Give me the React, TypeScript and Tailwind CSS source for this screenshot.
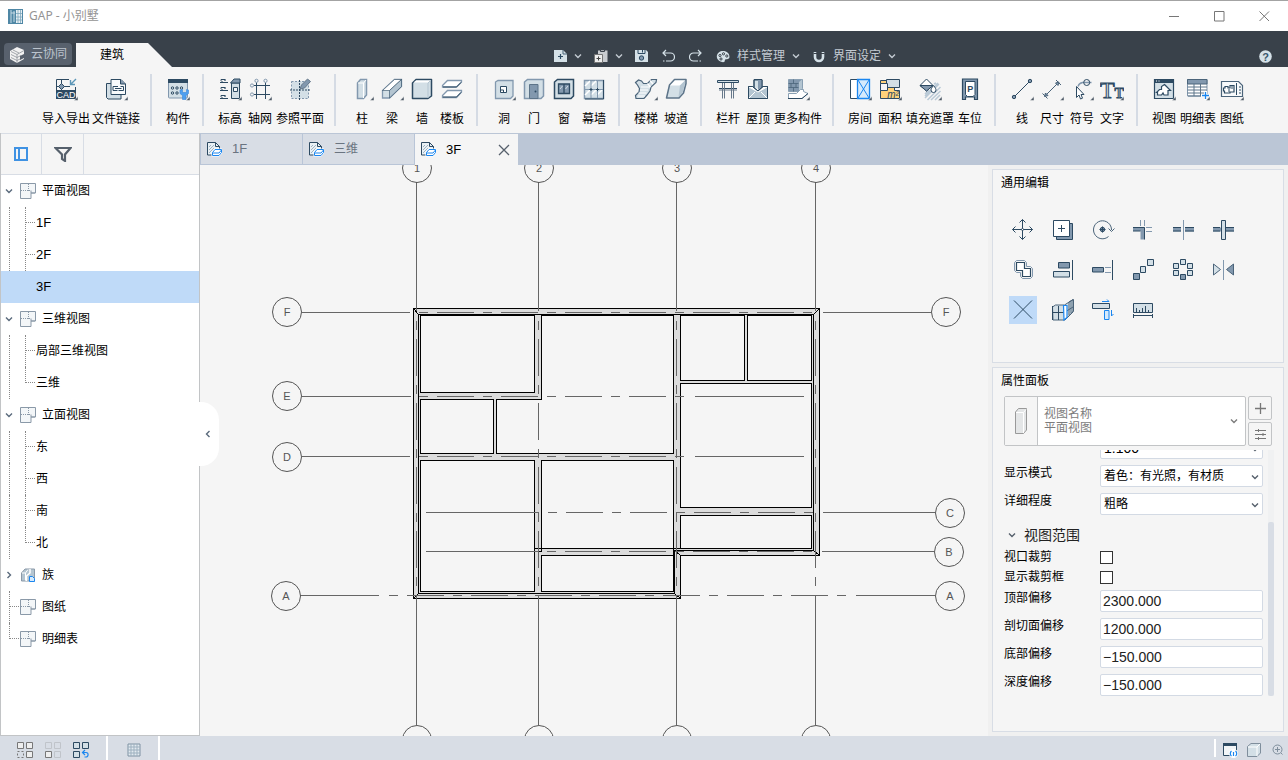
import React from "react";

const D = "#2d4a62";
const M = "#8298ae";
const L = "#d3dfe6";
const B = "#1a86f0";

type IconProps = { children: React.ReactNode; w?: number; h?: number; className?: string };

const Icon = ({ children, w = 24, h = 24, className = "" }: IconProps) => (
  <svg
    width={w}
    height={h}
    viewBox={`0 0 ${w} ${h}`}
    fill="none"
    stroke={D}
    className={`shrink-0 ${className}`}
    aria-hidden="true"
  >
    {children}
  </svg>
);

const Chevron = ({ className = "" }: { className?: string }) => (
  <svg width="8" height="8" viewBox="0 0 8 8" fill="none" stroke="currentColor" strokeWidth="1.4" className={`shrink-0 ${className}`} aria-hidden="true">
    <path d="M1 2.500l3 3 3-3" />
  </svg>
);

/* ---------- ribbon ---------- */

type Tool = { label: string; icon: React.ReactNode; more?: boolean; wide?: string };

const groups: Tool[][] = [
  [
    {
      label: "导入导出",
      more: true,
      wide: "w-[50px]",
      icon: (
        <>
          <path d="M2.500 12V1.500H15M2 8.500h14M7.500 2v10M21.500 9v4" />
          <path d="M7.500 5.500l3 3-3 3-3-3z" fill={M} />
          <path d="M22 1l-5 5M16.500 2v4.500H21" stroke="#5d97b8" strokeWidth="1.400" />
          <path d="M2 12h20v9H2z" fill={D} stroke="none" />
          <text x="12" y="20" textAnchor="middle" fontSize="9" fill="#fff" stroke="none">CAD</text>
        </>
      ),
    },
    {
      label: "文件链接",
      more: true,
      wide: "w-[50px]",
      icon: (
        <>
          <path d="M7 5.500H2.500v14l1.500 1.500h13v-4" fill={L} />
          <path d="M7 16.500V1.500h10l4.500 4.500v10.500z" fill="#f8fafb" />
          <path d="M16.500 1.500V6h5" fill={M} />
          <path d="M14 8.500H9v4h4.500M11 10.500h6.500M14.500 12.500h5v-4h-3" />
        </>
      ),
    },
  ],
  [
    {
      label: "构件",
      more: true,
      icon: (
        <>
          <rect x="2.500" y="1.500" width="19" height="18.500" rx="1" fill={L} stroke={M} />
          <path d="M2 1h20v4H2z" fill={D} stroke="none" />
          <g stroke={D}>
            <circle cx="6.500" cy="10" r="1.200" />
            <circle cx="11" cy="10" r="1.200" />
            <circle cx="15.500" cy="10" r="1.200" />
            <circle cx="6.500" cy="15" r="1.200" />
            <circle cx="11" cy="15" r="1.200" />
          </g>
          <path d="M14 12v3.500l2.500 2v4h3.500v-4l2.500-2V12l-2-.5v3h-4v-3z" fill="#4d9ff0" stroke="#3c86d6" strokeWidth=".6" />
        </>
      ),
    },
  ],
  [
    {
      label: "标高",
      more: true,
      icon: (
        <>
          <path d="M2 4.500h8M2 12.500h8M2 20.500h8M3 1.500h4v1.500M3 9.500h4v1.500M3 17.500h4v1.500" strokeWidth="1.200" />
          <path d="M3 1.500v1l2 2M3 9.500v1l2 2M3 17.500v1l2 2" />
          <path d="M13.500 5h8v15.500h-8z" fill={L} />
          <path d="M12.500 5l3.500-4h6v4z" fill={M} />
          <path d="M15.500 9.500h4v4h-4z" fill="#f5f7f9" />
        </>
      ),
    },
    {
      label: "轴网",
      more: true,
      icon: (
        <>
          <path d="M8.500 4.500V21M17.500 4.500V21M6 7.500h16M6 16.500h16" />
          <g stroke={M}>
            <circle cx="8.500" cy="2.800" r="1.600" />
            <circle cx="17.500" cy="2.800" r="1.600" />
            <circle cx="4" cy="7.500" r="1.600" />
            <circle cx="4" cy="16.500" r="1.600" />
          </g>
        </>
      ),
    },
    {
      label: "参照平面",
      wide: "w-[50px]",
      icon: (
        <>
          <path d="M3.500 3.500h17v17h-17z" fill={L} stroke={M} strokeDasharray="2 1.500" />
          <path d="M11.500 2v20M2 12h20" strokeDasharray="2 1" />
          <path d="M12 11l1.500-4 6-6 3 2.500-6 6.500z" fill={M} stroke="#66788a" />
        </>
      ),
    },
  ],
  [
    {
      label: "柱",
      more: true,
      icon: (
        <>
          <path d="M7.500 5l3-3.500h6V17l-3 3.500h-6z" fill={L} stroke={M} strokeWidth="1.500" />
          <path d="M8 5h5.500l2.500-3M13.500 5v15" stroke="#fff" />
        </>
      ),
    },
    {
      label: "梁",
      more: true,
      icon: (
        <>
          <path d="M2.500 12.500l12-11h7v7L9.500 20h-7z" fill={L} stroke={M} strokeWidth="1.300" />
          <path d="M2.500 12.500l12-11h7l-12 11z" fill="#fff" stroke={D} strokeWidth=".6" />
          <path d="M9.500 12.500V20l12-11.500v-7z" fill="#b4c5d1" stroke={D} strokeWidth=".6" />
        </>
      ),
    },
    {
      label: "墙",
      icon: (
        <>
          <path d="M2.500 5L6 1.500h15.500V18L18 20.500H2.500z" fill={L} strokeWidth="1.500" strokeLinejoin="round" />
          <path d="M3.500 4.500L6 2.500h14.500l-2.500 2z" fill="#fff" stroke="none" />
          <path d="M18 5v15M18 5l3-3" stroke="#b4c5d1" />
        </>
      ),
    },
    {
      label: "楼板",
      icon: (
        <>
          <path d="M2.500 7.500l5-5h14v1.500l-5 5h-14z" fill="#fff" stroke={M} strokeWidth="1.300" />
          <path d="M2.500 17.500l5-5h14V14l-5 5.500h-14z" fill="#fff" stroke={M} strokeWidth="1.300" />
          <path d="M3 9h13.500l4.500-4.500M3 19h13.500l4.500-4.500" />
        </>
      ),
    },
  ],
  [
    {
      label: "洞",
      more: true,
      icon: (
        <>
          <path d="M3.500 4L6 2.500h15V18l-2.500 2.500h-15z" fill={L} stroke={M} strokeWidth="1.300" />
          <path d="M8.500 8.500h6v6h-6z" fill="#fff" />
          <path d="M8.500 12h3v3" />
        </>
      ),
    },
    {
      label: "门",
      icon: (
        <>
          <path d="M2.500 4l3-2.500h16V18l-2.500 2.500h-16.500z" fill={L} stroke={M} strokeWidth="1.500" />
          <path d="M7.500 20.500v-14h8.500v14z" fill={M} stroke="#5d7489" />
          <circle cx="13.500" cy="13.500" r="1" fill={D} stroke="none" />
        </>
      ),
    },
    {
      label: "窗",
      icon: (
        <>
          <path d="M2.500 4l3-2.500h16V18L19 20.500H2.500z" fill={L} strokeWidth="1.500" />
          <path d="M6.500 6h11v9.500h-11zM12 6v9.500" fill={M} strokeWidth="1.300" />
          <path d="M8 11l2.500-3M13.500 11l2.500-3" stroke={L} />
        </>
      ),
    },
    {
      label: "幕墙",
      icon: (
        <>
          <path d="M2.500 2.500h19v18h-19z" fill={L} stroke={M} strokeWidth="1.500" />
          <path d="M3 8l5-5M9 8l5-5M3 17l5-5M9 17l5-5M15 17l5-5" stroke="#fff" strokeWidth="1.500" />
          <path d="M9 2v19M15.500 2v19M2 11.500h20" stroke={M} />
          <path d="M7.500 11.500h3M14 11.500h3M9 10v3M15.500 10v3M21.500 2v19H3" />
        </>
      ),
    },
  ],
  [
    {
      label: "楼梯",
      more: true,
      icon: (
        <>
          <path d="M1.500 4.500l3-2.500 3 1 2 2.500h4l4-4h5l-.5 3-5 4.500-1 4-3 4-3 3.500H2l-.5-3 3.500-3.500.5-3.500-2-3.500z" fill={L} strokeWidth="1.200" stroke="#4b647a" />
          <path d="M6 12h8M4.500 15h8M4 18h7M7 9h9M16 2.500l3 3.500M13.500 5.500l3 3.500" stroke="#fff" strokeWidth="1.200" />
        </>
      ),
    },
    {
      label: "坡道",
      icon: (
        <>
          <path d="M2.500 20l3-13 5-5.500h11.500v4L19.500 15 15 20z" fill={L} stroke="#5d7489" strokeWidth="1.500" strokeLinejoin="round" />
          <path d="M6 7.500l5-5h10l-5 5z" fill="#fff" stroke="none" />
          <path d="M16 7.500l5-5v3L18.500 15 14.500 19z" fill="#b4c5d1" stroke="none" />
        </>
      ),
    },
  ],
  [
    {
      label: "栏杆",
      icon: (
        <>
          <path d="M1.500 2.500h21v2h-21zM3 10.500h18" fill={L} />
          <path d="M6.500 5v15.500M8.500 5v15.500M15.500 5v15.500M17.500 5v15.500M3 12h18" stroke="#66788a" />
        </>
      ),
    },
    {
      label: "屋顶",
      icon: (
        <>
          <path d="M8 10.500V2h8v8.500" fill={L} />
          <path d="M12 12V2h4v8.500z" fill={M} stroke="none" />
          <path d="M2.500 8.500h4L12 13l5-4.500h4.500v12h-19z" fill="#fff" />
          <path d="M3 9l9 5 9-5v11H3z" fill="#b4c5d1" stroke="none" />
          <path d="M3 20l6-6M21 20l-6-6M3 9l9 5 9-5" stroke="#fff" />
          <path d="M2.500 8.500h4L12 13l5-4.500h4.500v12h-19zM8 9V1.500h8V9" />
        </>
      ),
    },
    {
      label: "更多构件",
      more: true,
      wide: "w-[50px]",
      icon: (
        <>
          <path d="M2.500 1.500h14v9l-4 3h-10z" fill={M} stroke="#8aa0b3" />
          <path d="M2.500 5.500h10M2.500 9.500h10M7.500 1.500v4M5 5.500v4M10 5.500v4M7.500 9.500v4" stroke="#4b647a" strokeWidth=".8" />
          <path d="M13 4l3-2.500v9l-3 3z" fill="#b4c5d1" stroke="none" />
          <path d="M2.500 15.500h8l4-4h3v2l4.500 2-6 5h-13.500z" fill="#fff" stroke="#8aa0b3" />
          <path d="M2 20.500h14l6-5" />
        </>
      ),
    },
  ],
  [
    {
      label: "房间",
      more: true,
      icon: (
        <>
          <path d="M2.500 1.500h7v19h-7z" fill="#fff" />
          <path d="M9.500 1.500h12v19h-12z" fill="#d6eafc" stroke={B} strokeWidth="1.300" />
          <path d="M10 2l11 18M21 2L10 20" stroke={B} />
        </>
      ),
    },
    {
      label: "面积",
      more: true,
      icon: (
        <>
          <path d="M2.500 2.500h14v10h5v8h-19z" fill="#ffd27a" />
          <path d="M8.500 1.500h13v8h-13z" fill={L} />
          <path d="M2.500 5.500h7v7h-7z" fill="#f5f5f5" />
          <text x="15" y="19.500" textAnchor="middle" fontSize="10" fontStyle="italic" fill={D} stroke="none">m²</text>
        </>
      ),
    },
    {
      label: "填充遮罩",
      more: true,
      wide: "w-[50px]",
      icon: (
        <>
          <path d="M7 20L21 6M9.500 22L22.500 9M13 22l9.500-9M17 22l5-5M7 16l4-4M16 6l2-1M7 18L20 5" stroke="#b9c9d6" strokeWidth="1.500" />
          <path d="M2 7.500L8.500 1l6.500 6.500L8.500 13z" fill="#fff" />
          <path d="M2 7.500h13L8.500 13z" fill={M} />
          <path d="M15.500 7.500c2 2.500 2.500 3.500 2.500 4.500a2.500 2.500 0 01-5 0c0-1 .5-2 2.500-4.500z" fill="#fff" />
        </>
      ),
    },
    {
      label: "车位",
      icon: (
        <>
          <path d="M4.500 1v20.500h3V19h9v2.500h3V1z" fill={M} strokeWidth="1.200" />
          <path d="M7.500 3.500h9.500v13l-2 2H9.500l-2-2z" fill="#fff" />
          <text x="12.300" y="14" textAnchor="middle" fontSize="9" fontWeight="bold" fill={D} stroke="none">P</text>
        </>
      ),
    },
  ],
  [
    {
      label: "线",
      more: true,
      icon: (
        <>
          <path d="M4 19L20 3" />
          <circle cx="4" cy="19" r="1.700" fill={M} />
          <circle cx="20" cy="3" r="1.700" fill={M} />
        </>
      ),
    },
    {
      label: "尺寸",
      more: true,
      icon: (
        <>
          <path d="M5 18L18.500 4.500M2.500 15.500l5 5M16 2l5 5" stroke="#4b647a" />
          <path d="M4.500 18.500l1-3.500 2.500 2.500zM19 4l-3.500 1L18 7.500z" fill={M} stroke="#4b647a" />
        </>
      ),
    },
    {
      label: "符号",
      more: true,
      icon: (
        <>
          <path d="M21.500 4.500h-9c-3 .5-4 2-4.500 4" stroke={M} strokeWidth="1.300" />
          <circle cx="16.700" cy="4.500" r="3" />
          <path d="M6.500 8.500v11l2.500-2.500 1.500 4 2-.8-1.500-3.700H14z" fill="#fff" />
        </>
      ),
    },
    {
      label: "文字",
      more: true,
      icon: (
        <>
          <text x="0" y="20" fontFamily="Liberation Serif" fontSize="24" fill={L} stroke={D}>T</text>
          <text x="14.500" y="20" fontFamily="Liberation Serif" fontSize="14" fontWeight="bold" fill={M} stroke={D} strokeWidth=".8">T</text>
        </>
      ),
    },
  ],
  [
    {
      label: "视图",
      more: true,
      icon: (
        <>
          <path d="M2.500 1.500h19v19h-19z" fill={L} strokeWidth="1.200" />
          <path d="M2 1h20v4H2z" fill={D} stroke="none" />
          <path d="M4 3h1M6.500 3h1" stroke="#fff" />
          <path d="M12.500 6.500l6 6H16v4.500h-4l-1-2-1.500 2h-4v-2.500h-1l3-3h2V8.500z" fill="#fff" strokeWidth="1.200" />
        </>
      ),
    },
    {
      label: "明细表",
      more: true,
      wide: "w-[38px]",
      icon: (
        <>
          <path d="M1.500 1.500h19.500V18h-19.500z" fill="#fff" stroke={M} />
          <path d="M1.500 1.500h19.500V6h-19.500z" fill={M} stroke="#4b647a" />
          <path d="M1.500 9h19.500M1.500 12h19.500M1.500 15h19.500M8 6v12M14.500 6v12M2 18h13" stroke="#5d7489" />
          <path d="M19.500 13v9M15 17.500h9" stroke="#fff" strokeWidth="3" />
          <path d="M19.500 14v7M16 17.500h7" stroke={B} strokeWidth="1.300" />
        </>
      ),
    },
    {
      label: "图纸",
      more: true,
      icon: (
        <>
          <path d="M1.500 3.500h17l4 4v11h-21z" fill="#f8fafb" stroke="#4b647a" strokeWidth="1.200" />
          <path d="M5 8.500h3v1.500h2V7.500h4V14h-4v1H4.500v-2h-1v-3H5z" fill="#fff" strokeWidth="1.200" />
          <path d="M12 8v3M9 11v3M16.500 5v12M19 9h2M19 12h2M19 15h2" />
        </>
      ),
    },
  ],
];

const RibbonTool = ({ tool }: { tool: Tool }) => (
  <button type="button" className={`flex flex-col items-center gap-[9px] whitespace-nowrap ${tool.wide ?? "w-[30px]"}`}>
    <Icon>
      {tool.icon}
      {tool.more && <path d="M24 18.500v4h-4z" fill="#4a5663" stroke="#f5f5f5" strokeWidth=".5" />}
    </Icon>
    <span className="text-xs leading-4">{tool.label}</span>
  </button>
);

/* ---------- header ---------- */

const TitleBar = () => (
  <header className="flex h-[31px] shrink-0 items-center border-t border-[#a3a3a3] bg-white pl-2 pr-px">
    <Icon w={15} h={15}>
      <path d="M0 0h15v15H0z" fill="#4f87a5" stroke="none" />
      <path d="M3 1v13M3 4h4M6 2v11" stroke="#c8dbe6" />
      <path d="M8 1h6v13H8z" fill="#e8f0f4" stroke="none" />
      <path d="M10 1v13M12.500 1v13M8 4.500h6M8 8h6M8 11h6" stroke="#7ea7bd" strokeWidth=".8" />
    </Icon>
    <h1 className="ml-1.5 flex-1 font-['Noto_Sans','Noto_Sans_CJK_SC',sans-serif] text-xs text-[#949494]">GAP - 小别墅</h1>
    <button type="button" aria-label="最小化" className="flex w-[45px] justify-center">
      <Icon w={11} h={11}><path d="M0 5.500h10" stroke="#777" /></Icon>
    </button>
    <button type="button" aria-label="最大化" className="flex w-[45px] justify-center">
      <Icon w={11} h={11}><path d="M.500.500h9.500v9.500H.500z" stroke="#777" /></Icon>
    </button>
    <button type="button" aria-label="关闭" className="flex w-[45px] justify-center">
      <Icon w={11} h={11}><path d="M.500.500l9.500 9.500M10 .500L.500 10" stroke="#777" /></Icon>
    </button>
  </header>
);

const QuickBar = () => (
  <div className="ml-[382px] flex items-center gap-3 self-end pb-[3px] text-[#c3cad2]">
    <button type="button" aria-label="新建" className="flex items-center gap-[7px]">
      <Icon w={13} h={14}>
        <path d="M0 1h9l4 4v8H0z" fill="#d5e1e8" stroke="none" />
        <path d="M9 1v4h4" stroke="#4b6478" />
        <path d="M6.500 5v5M4 7.500h5" strokeWidth="1.200" />
      </Icon>
      <Chevron />
    </button>
    <button type="button" aria-label="粘贴" className="flex items-center gap-[7px]">
      <Icon w={14} h={14}>
        <path d="M4 1.500h9.500V13H8V5H4z" fill="#c9ccd0" stroke="none" />
        <path d="M6.500.500h4v2h-4z" fill="#a7abb0" stroke="#39414a" />
        <path d="M.500 5.500h8v8h-8z" fill="#eee" stroke="#777" />
        <path d="M4.500 7.500v4M2.500 9.500h4" stroke="#444" />
      </Icon>
      <Chevron />
    </button>
    <button type="button" aria-label="保存">
      <Icon w={13} h={14} className="block">
        <path d="M0 1h11l2 2v10H0z" fill="#d5e1e8" stroke="none" />
        <path d="M3 1v3.500h7V1M7.500 1v2.500" />
        <circle cx="6.500" cy="9" r="2.200" fill={M} />
      </Icon>
    </button>
    <button type="button" aria-label="撤销" className="ml-0.5">
      <Icon w={13} h={14} className="block">
        <path d="M4 1L1 4l3 3M1 4h7.500a4 4 0 010 8H4M1 12h1.500" stroke="#d5e1e8" strokeWidth="1.200" />
      </Icon>
    </button>
    <button type="button" aria-label="重做" className="ml-0.5">
      <Icon w={13} h={14} className="block">
        <path d="M9 1l3 3-3 3M12 4H4.500a4 4 0 000 8H9M10.500 12H12" stroke="#d5e1e8" strokeWidth="1.200" />
      </Icon>
    </button>
    <button type="button" className="ml-0.5 flex items-center gap-[7px] text-xs leading-4">
      <Icon w={14} h={14}>
        <path d="M7 2c4 0 6.500 2.500 6.500 6 0 2-2 2.200-3.500 2.200-1.500 0-1 1.500-1.500 2.500C7 14.200.800 12 .800 7.500.800 4 4 2 7 2z" fill="#d5e1e8" stroke="none" />
        <g stroke="#39414a">
          <circle cx="4" cy="6.500" r="1.100" />
          <circle cx="7.500" cy="4.800" r="1.100" />
          <circle cx="10.800" cy="7" r="1.100" />
          <circle cx="5" cy="10" r="1.100" />
        </g>
      </Icon>
      样式管理
      <Chevron />
    </button>
    <button type="button" className="flex items-center gap-[7px] text-xs leading-4">
      <Icon w={14} h={14}>
        <path d="M3 3v5a4 4 0 008 0V3" stroke="#d5e1e8" strokeWidth="2.600" />
        <path d="M1.500 4.500h3.500M9 4.500h3.500" stroke="#39414a" />
      </Icon>
      界面设定
      <Chevron />
    </button>
  </div>
);

const MenuBar = () => (
  <nav className="flex h-9 shrink-0 items-end bg-[#39414a] pl-1">
    <button type="button" className="mb-0.5 flex h-[22px] w-[68px] items-center gap-1.5 whitespace-nowrap rounded-sm bg-[#58616d] pl-1.5 text-xs text-[#bcc4cd]">
      <Icon w={15} h={17}>
        <path d="M0 5l7-4 7 3v9l-7 4-7-4z" fill="#f2f2f2" stroke="none" />
        <path d="M1 5.500l6 3 7-4M7 8.500V17M1 8.500l6 3 4-2M1 11.500l6 3 4-2M3 4l6 3" stroke="#8b9198" strokeWidth=".8" />
        <path d="M10 10l4-2v4l-4 2z" fill="#58616d" stroke="none" />
      </Icon>
      云协同
    </button>
    <button type="button" className="ml-1 flex h-6 w-24 items-center bg-[#f5f5f5] pl-6 text-xs [clip-path:polygon(0_0,75%_0,100%_100%,0_100%)]">
      建筑
    </button>
    <QuickBar />
    <button type="button" aria-label="帮助" className="ml-auto mr-4 self-end pb-1">
      <Icon w={13} h={13} className="block">
        <circle cx="6.500" cy="6.500" r="6.300" fill="#d5e1e8" stroke="none" />
        <text x="6.500" y="10.500" textAnchor="middle" fontSize="11" fontWeight="bold" fill="#39566c" stroke="none">?</text>
      </Icon>
    </button>
  </nav>
);

/* ---------- left tree ---------- */

const PlanIcon = () => (
  <Icon w={16} h={16}>
    <path d="M.500.500h15v9.500H11v5.500H.500z" fill="#f3f6f8" stroke="#8a99a8" />
    <path d="M1 7.500h10M8.500 1v7" stroke="#8a99a8" strokeDasharray="1 1" />
    <path d="M11 7.500V10h4" stroke="#8a99a8" />
  </Icon>
);

const FamilyIcon = () => (
  <Icon w={16} h={16}>
    <path d="M1.500 6l3.500-4h9.500v12h-13z" fill="#b4c5d1" stroke="#8a99a8" />
    <path d="M2 6h3.500L8 2.500M5.500 13.500V6" stroke="#fff" />
    <path d="M6.500 14V9L10 6V2" stroke="#fff" strokeWidth="1.500" />
    <path d="M9.500 9.500h3l2 2v3h-5z" fill="#d6eafc" stroke={B} />
  </Icon>
);

const RootRow = ({ label, open = true, family = false }: { label: string; open?: boolean; family?: boolean }) => (
  <li className="flex h-8 items-center pl-1 text-[#5a6a7c]">
    <Chevron className={open ? "" : "-rotate-90"} />
    <span className="ml-[7px]">{family ? <FamilyIcon /> : <PlanIcon />}</span>
    <span className="ml-1.5 text-xs text-black">{label}</span>
  </li>
);

const ChildRow = ({ label, last = false, active = false }: { label: string; last?: boolean; active?: boolean }) => (
  <li className={`flex h-8 items-start pl-2 ${active ? "bg-[#bfdaf8]" : ""}`}>
    <span className={`h-8 w-4 ${active ? "" : "border-l border-dotted border-[#888]"}`} />
    <span className={`w-[11px] ${last ? "h-4" : "h-8"} ${active ? "" : "border-l border-dotted border-[#888]"}`}>
      {!active && <span className="block h-4 w-[9px] border-b border-dotted border-[#888]" />}
    </span>
    <span className={/F$/.test(label) ? "text-[13px] leading-8" : "text-xs leading-8"}>{label}</span>
  </li>
);

const LeafRow = ({ label, last = false }: { label: string; last?: boolean }) => (
  <li className="flex h-8 items-start pl-2">
    <span className={`w-[11px] ${last ? "h-4" : "h-8"} border-l border-dotted border-[#888]`}>
      <span className="block h-4 w-[9px] border-b border-dotted border-[#888]" />
    </span>
    <span className="flex h-8 items-center gap-1.5 text-xs">
      <PlanIcon />
      {label}
    </span>
  </li>
);

const Sidebar = () => (
  <aside className="relative z-10 flex w-[200px] shrink-0 flex-col border-x border-b border-[#c2c4c6] bg-white">
    <div className="flex h-[42px] shrink-0 border-y border-[#d8dde5] bg-[#f5f5f5]">
      <button type="button" aria-label="面板" className="flex w-[41px] items-center justify-center border-r border-[#d8dde5]">
        <Icon w={14} h={14}><path d="M1 1h12v12H1zM5 1v12" stroke="#3f92e3" strokeWidth="2" /></Icon>
      </button>
      <button type="button" aria-label="过滤" className="flex w-[42px] items-center justify-center border-r border-[#d8dde5]">
        <Icon w={18} h={15}><path d="M1.500 1h15L11 7.500V14l-3-2V7.500z" stroke="#56606c" strokeWidth="2.200" /></Icon>
      </button>
    </div>
    <ul className="flex-1">
      <RootRow label="平面视图" />
      <ChildRow label="1F" />
      <ChildRow label="2F" />
      <ChildRow label="3F" active />
      <RootRow label="三维视图" />
      <ChildRow label="局部三维视图" />
      <ChildRow label="三维" last />
      <RootRow label="立面视图" />
      <ChildRow label="东" />
      <ChildRow label="西" />
      <ChildRow label="南" />
      <ChildRow label="北" last />
      <RootRow label="族" open={false} family />
      <LeafRow label="图纸" />
      <LeafRow label="明细表" last />
    </ul>
    <button
      type="button"
      aria-label="收起"
      className="absolute -right-5 top-1/2 flex h-16 w-[21px] -translate-y-1/2 items-center rounded-r-[18px] bg-white pl-1.5 text-[#5a6a7c]"
    >
      <Chevron className="rotate-90" />
    </button>
  </aside>
);

/* ---------- document tabs ---------- */

const DocIcon = () => (
  <Icon w={15} h={15}>
    <path d="M.500.500h8l4 4V13H.500z" fill="#e9f0f4" />
    <path d="M2 5l2-2M2 8l5-5M2 11l5-5" stroke="#9fb2c2" />
    <path d="M8.500.500v4h4" />
    <path d="M4.500 14.500v-5l2.500-3h8v5l-3 3z" fill="#fff" stroke="none" />
    <path d="M5.500 10.500l2.500-3h6.500v3L12 13.500H5.500z" fill="#fff" stroke={B} />
    <path d="M5.500 11h6.500l2.500-3" stroke={B} />
  </Icon>
);

const DocTabs = () => (
  <div className="flex h-8 shrink-0 border-t border-[#bbc6d6] bg-[#bbc6d6]">
    <button type="button" className="flex w-[103px] items-center border border-t-0 border-[#b9c5d7] bg-[#d8dde5] pl-1.5 text-[13px] text-[#6a7480]">
      <DocIcon />
      <span className="ml-2.5">1F</span>
    </button>
    <button type="button" className="flex w-28 items-center border-b border-r border-[#b9c5d7] bg-[#d8dde5] pl-1.5 text-xs text-[#6a7480]">
      <DocIcon />
      <span className="ml-2.5">三维</span>
    </button>
    <div className="flex w-[103px] items-center bg-[#f5f5f5] pl-1.5 text-[13px]">
      <DocIcon />
      <span className="ml-2.5 flex-1">3F</span>
      <button type="button" aria-label="关闭标签" className="mr-2">
        <Icon w={12} h={12}><path d="M1 1l10 10M11 1L1 11" stroke="#56606c" strokeWidth="1.300" /></Icon>
      </button>
    </div>
  </div>
);

/* ---------- floor plan ---------- */

const rooms = [
  "420.500 315.500 534.500 315.500 534.500 392.500 420.500 392.500",
  "541.500 315.500 673.500 315.500 673.500 453.500 496.500 453.500 496.500 399.500 541.500 399.500",
  "420.500 399.500 493.500 399.500 493.500 453.500 420.500 453.500",
  "680.500 315.500 744.500 315.500 744.500 380.500 680.500 380.500",
  "747.500 315.500 811.500 315.500 811.500 380.500 747.500 380.500",
  "680.500 383.500 811.500 383.500 811.500 507.500 680.500 507.500",
  "680.500 515.500 811.500 515.500 811.500 548.500 680.500 548.500",
  "420.500 460.500 534.500 460.500 534.500 591.500 420.500 591.500",
  "541.500 460.500 673.500 460.500 673.500 548.500 541.500 548.500",
  "541.500 555.500 673.500 555.500 673.500 591.500 541.500 591.500",
];

const bubbles = [
  { x: 287, y: 312, t: "F" },
  { x: 287, y: 396, t: "E" },
  { x: 287, y: 457, t: "D" },
  { x: 286, y: 596, t: "A" },
  { x: 946, y: 312, t: "F" },
  { x: 950, y: 513, t: "C" },
  { x: 949, y: 552, t: "B" },
  { x: 950, y: 596, t: "A" },
  { x: 417, y: 168, t: "1" },
  { x: 539, y: 168, t: "2" },
  { x: 677, y: 168, t: "3" },
  { x: 816, y: 168, t: "4" },
  { x: 417, y: 740, t: "1" },
  { x: 539, y: 740, t: "2" },
  { x: 677, y: 740, t: "3" },
  { x: 816, y: 740, t: "4" },
];

const columns = [416.5, 538.5, 676.5, 815.5];

const FloorPlan = () => (
  <svg
    viewBox="200 165 788 571"
    preserveAspectRatio="xMidYMid slice"
    fill="none"
    className="block h-full w-full"
    shapeRendering="crispEdges"
  >
    <g stroke="#000">
      <path d="M413.500 308.500H819.500V555.500H680.500V598.500H413.500z" fill="#dcdcdc" />
      <path d="M418.500 314.500H813.500V550.500H674.500V593.500H418.500z" />
      {rooms.map((points) => (
        <polygon key={points} points={points} fill="#f5f5f5" />
      ))}
      <path d="M534 548.500H812M534.500 548V552M541.500 548V552M534 551.500h7M673.500 548V592" />
      <path d="M413.500 308.500l5 6M819.500 308.500l-6 6M819.500 555.500l-6-5M680.500 555.500l-6-5M413.500 598.500l5-5M680.500 598.500l-6-5" />
    </g>
    <g stroke="#666">
      {columns.map((x) => (
        <g key={x}>
          <path d={`M${x} 182V311M${x} 596V725`} />
          <path d={`M${x} 321V588`} strokeDasharray="9 9 37 9" />
        </g>
      ))}
      <path d="M302 312.500H410M302 396.500H411M302 456.500H410M300 595.500H379" />
      <path d="M823 312.500H931M823 512.500H935M822 551.500H934M856 595.500H935" />
      <path d="M419 312.500H814M419 396.500H686M419 456.500H686" strokeDasharray="9 9 37 9" />
      <path d="M695 396.500H804M695 456.500H804M426 512.500H539M426 551.500H539" />
      <path d="M548 512.500H814M547 551.500H814M389 595.500H848" strokeDasharray="9 9 37 9" />
    </g>
    <g stroke="#555" shapeRendering="auto">
      {bubbles.map((b) => (
        <g key={`${b.x}-${b.y}`}>
          <circle cx={b.x} cy={b.y} r="14.500" />
          <text x={b.x} y={b.y + 4} textAnchor="middle" fontSize="11" fill="#555" stroke="none">
            {b.t}
          </text>
        </g>
      ))}
    </g>
  </svg>
);

/* ---------- right panels ---------- */

const editTools: { name: string; icon: React.ReactNode; active?: boolean }[] = [
  {
    name: "移动",
    icon: (
      <>
        <path d="M11.500 1.500v20M1.500 11.500h20M8.500 4.500l3-3 3 3M8.500 18.500l3 3 3-3M4.500 8.500l-3 3 3 3M18.500 8.500l3 3-3 3" />
        <circle cx="11.500" cy="11.500" r="1" fill="#fff" />
      </>
    ),
  },
  {
    name: "复制",
    icon: (
      <>
        <path d="M5.500 5.500h16v16h-16z" fill={M} />
        <path d="M2.500 2.500h16v16h-16z" fill="#fff" />
        <path d="M10.500 7v7M7 10.500h7" />
      </>
    ),
  },
  {
    name: "旋转",
    icon: (
      <>
        <path d="M17.500 18.500A9 9 0 1120.500 12M17.500 10.500l3 3 3-3" stroke="#4b647a" />
        <circle cx="11.500" cy="11.500" r="2.200" fill={M} />
        <path d="M11.500 8.500v6M8.500 11.500h6" />
      </>
    ),
  },
  {
    name: "修剪",
    icon: (
      <>
        <path d="M2 9h11.500v12.500H9.500V13H2z" fill={M} stroke="none" />
        <path d="M2 9.500h11.500V21.500M2 13h7.500" />
        <path d="M9.500 2v6M13.500 2v6M15 9.500h6M15 13.500h6" stroke={M} />
      </>
    ),
  },
  {
    name: "打断",
    icon: (
      <>
        <path d="M2 9.500h8v4H2zM14 9.500h9v4h-9z" fill={M} stroke="none" />
        <path d="M2 9.500h8M14 9.500h9M2 13h8M14 13h9" />
        <path d="M12.500 2v20" stroke={M} />
      </>
    ),
  },
  {
    name: "延伸",
    icon: (
      <>
        <path d="M2 9.500h8v4H2zM14 9.500h9v4h-9z" fill={M} stroke="none" />
        <path d="M2 9.500h7M15 9.500h8M2 13h7M15 13h8" />
        <path d="M10.500 2.500h4v19h-4z" fill={L} />
      </>
    ),
  },
  {
    name: "合并",
    icon: (
      <>
        <path d="M5.500 2.500h8l2 2v4h4l2 2v8l-2 2h-8l-2-2v-4h-4l-2-2v-8z" stroke={M} />
        <path d="M5.500 4.500h8v6h6v8h-8v-6h-6z" fill="#fff" strokeWidth="1.200" />
      </>
    ),
  },
  {
    name: "对齐",
    icon: (
      <>
        <path d="M7.500 4.500h11v5.500h-11z" fill={M} />
        <path d="M2.500 13.500h16v5.500h-16z" fill={L} />
        <path d="M21.500 2v20" />
      </>
    ),
  },
  {
    name: "对齐到线",
    icon: (
      <>
        <path d="M1.500 9.500h11v4.500h-11z" fill={M} />
        <path d="M14 9.500h6M14 14.500h6" stroke={M} />
        <path d="M21.500 2v20" />
      </>
    ),
  },
  {
    name: "阵列",
    icon: (
      <>
        <path d="M2.500 15.500h6v6h-6z" fill={M} />
        <path d="M9.500 8.500h5v6h-5zM16.500 1.500h6v6h-6z" fill={L} />
      </>
    ),
  },
  {
    name: "环形阵列",
    icon: (
      <>
        <path d="M9.500 1.500h5v5h-5zM2.500 5.500h5v5h-5zM16.500 5.500h5v5h-5zM2.500 12.500h5v5h-5zM16.500 12.500h5v5h-5z" fill={L} />
        <path d="M9.500 16.500h5v5h-5z" fill={M} />
      </>
    ),
  },
  {
    name: "镜像",
    icon: (
      <>
        <path d="M2.500 6v11l7-5.500z" fill={L} stroke="#4b647a" />
        <path d="M22.500 6v11l-7-5.500z" fill={M} stroke="#4b647a" />
        <path d="M12.500 2v20" stroke={M} />
      </>
    ),
  },
  { name: "删除", active: true, icon: <path d="M3 2.500l18 18M21 2.500l-18 18" /> },
  {
    name: "幕墙编辑",
    icon: (
      <>
        <path d="M1.500 9l3-2h9l8.500-5.500V14L14 22H2z" fill={L} stroke="#4b647a" />
        <path d="M14 22l8.500-9V1.500L18 4v13M20 3v12M14 14l8-5" stroke="#4b647a" />
        <path d="M2 14.500h11M7.500 8v14M1.500 8v14" />
        <path d="M12.500 7.500h3.500v12l-3 2.500z" fill="#fff" stroke={B} strokeWidth="1.200" />
      </>
    ),
  },
  {
    name: "翻转",
    icon: (
      <>
        <path d="M1.500 5.500h17v5h-17z" fill={L} />
        <path d="M13.500 12.500h4.500v9h-4.500z" fill="#d6eafc" stroke={B} />
        <path d="M11 3.500h7M16 1.500l2 2M20.500 12v6M20.500 18l2-2" stroke={B} />
      </>
    ),
  },
  {
    name: "测量",
    icon: (
      <>
        <path d="M2.500 5.500h19v9h-19z" fill={L} />
        <path d="M5.500 10v4M8.500 12v2M11.500 10v4M14.500 8v6M17.500 12v2M2.500 17.500h19M2.500 16v4M21.500 16v4" />
      </>
    ),
  },
];

const EditPanel = () => (
  <section className="h-[194px] shrink-0 border border-[#d8dde5] bg-[#f5f5f5] pl-2">
    <h2 className="mt-[5px] text-xs leading-4">通用编辑</h2>
    <div className="ml-0.5 mt-[19px] grid w-[240px] grid-cols-6">
      {editTools.map((tool) => (
        <button key={tool.name} type="button" aria-label={tool.name} className="flex h-10 items-center justify-center">
          <span className={`flex size-7 items-center justify-center ${tool.active ? "bg-[#bfdaf8]" : ""}`}>
            <Icon>{tool.icon}</Icon>
          </span>
        </button>
      ))}
    </div>
  </section>
);

const SelectRow = ({ id, label, value, latin = false }: { id: string; label: string; value: string; latin?: boolean }) => (
  <div className="flex h-7 items-start">
    <label htmlFor={id} className="w-24 text-xs leading-4">{label}</label>
    <div className="relative flex-1 text-[#56606c]">
      <select
        id={id}
        className={`block h-[22px] w-full appearance-none rounded-[2px] border border-[#d3dae4] bg-white px-[3px] text-black ${latin ? "text-sm" : "text-xs"}`}
      >
        <option>{value}</option>
      </select>
      <Chevron className="pointer-events-none absolute right-1 top-2" />
    </div>
  </div>
);

const CheckRow = ({ id, label }: { id: string; label: string }) => (
  <div className="flex h-5 items-center">
    <label htmlFor={id} className="w-24 text-xs leading-4">{label}</label>
    <input id={id} type="checkbox" className="size-[13px] appearance-none border border-[#333] bg-white" />
  </div>
);

const InputRow = ({ id, label, value }: { id: string; label: string; value: string }) => (
  <div className="flex h-7 items-start">
    <label htmlFor={id} className="w-24 text-xs leading-4">{label}</label>
    <input
      id={id}
      type="text"
      defaultValue={value}
      className="h-[22px] w-0 flex-1 rounded-[2px] border border-[#d3dae4] bg-white px-0.5 text-sm text-[#222]"
    />
  </div>
);

const PropertyPanel = () => (
  <section className="flex flex-1 flex-col border border-[#d8dde5] bg-[#f5f5f5]">
    <h2 className="mt-[5px] pl-2 text-xs leading-4">属性面板</h2>
    <div className="mt-[7px] flex gap-0.5 px-[11px]">
      <button type="button" className="flex h-[50px] flex-1 items-center rounded-[2px] border border-[#c2c4c6] bg-white pr-[7px] text-left text-xs leading-[14px] text-[#7c7c7c]">
        <span className="flex h-full w-[33px] items-center justify-center border-r border-[#c2c4c6] bg-[#f5f5f5]">
          <Icon w={12} h={28}>
            <path d="M.500 5l3-3.500h8V23l-3 3.500h-8z" fill="#e4e6e7" stroke="#999" />
            <path d="M1 5.500h7.500l2.500-3M8.500 5.500V26" stroke="#fff" />
          </Icon>
        </span>
        <span className="ml-1.5 flex-1">
          视图名称
          <br />
          平面视图
        </span>
        <Chevron />
      </button>
      <div className="flex flex-col gap-0.5">
        <button type="button" aria-label="添加" className="flex size-6 items-center justify-center rounded-[2px] border border-[#c2c4c6]">
          <Icon w={11} h={11}><path d="M5.500 0v11M0 5.500h11" stroke="#777" strokeWidth="1.300" /></Icon>
        </button>
        <button type="button" aria-label="设置" className="flex size-6 items-center justify-center rounded-[2px] border border-[#c2c4c6]">
          <Icon w={11} h={11}>
            <path d="M0 1.500h11M0 5.500h11M0 9.500h11M3.500 0v3M8 4v3M3.500 8v3" stroke="#777" />
          </Icon>
        </button>
      </div>
    </div>
    <div className="mt-1 flex pl-[11px] pr-[9px]">
      <div className="h-[248px] flex-1 overflow-hidden">
        <div className="-mt-[13px]">
          <SelectRow id="scale" label="" value="1:100" latin />
          <SelectRow id="display" label="显示模式" value="着色：有光照，有材质" />
          <SelectRow id="detail" label="详细程度" value="粗略" />
          <h3 className="flex h-[26px] items-center gap-2 pl-1 pt-0.5 text-sm text-[#222]">
            <Chevron className="text-[#56606c]" />
            视图范围
          </h3>
          <CheckRow id="crop" label="视口裁剪" />
          <CheckRow id="crop-frame" label="显示裁剪框" />
          <div className="pt-[3px]">
            <InputRow id="top" label="顶部偏移" value="2300.000" />
            <InputRow id="cut" label="剖切面偏移" value="1200.000" />
            <InputRow id="bottom" label="底部偏移" value="−150.000" />
            <InputRow id="depth" label="深度偏移" value="−150.000" />
          </div>
        </div>
      </div>
      <div className="ml-[5px] h-[246px] w-1.5 bg-[#f0f1f2] pt-[72px]">
        <div className="h-full rounded-[2px] bg-[#d8dde5]" />
      </div>
    </div>
  </section>
);

/* ---------- status bar ---------- */

const StatusBar = () => (
  <footer className="flex h-6 shrink-0 items-center bg-[#d8dde5] pl-[17px] pr-1">
    <div className="flex items-center gap-3 pt-1">
      <Icon w={16} h={16}>
        <path d="M.500.500h6v6h-6zM9.500.500h6v6h-6zM9.500 9.500h6v6h-6z" fill="#eee" stroke="#777" />
        <path d="M.500 9.500h6v6h-6z" stroke="#777" strokeDasharray="2 2" />
      </Icon>
      <Icon w={16} h={16}>
        <path d="M.500.500h6v6h-6zM9.500.500h6v6h-6zM9.500 9.500h6v6h-6z" stroke="#c0c4ca" />
        <path d="M.500 9.500h6v6h-6z" fill="#eee" stroke="#777" />
      </Icon>
      <Icon w={16} h={16}>
        <path d="M.500.500h6v6h-6zM9.500.500h6v6h-6zM.500 9.500h6v6h-6z" fill={L} />
        <path d="M12 8L9.500 10.500l2.500 2.500M9.500 10.500H13c3 0 2.500 4.500 0 4.500h-1.500" stroke={B} strokeWidth="1.200" />
      </Icon>
    </div>
    <span className="ml-[17px] h-6 w-0.5 bg-white" />
    <Icon w={14} h={14} className="ml-[19px] mt-1">
      <path d="M1 1h12v12H1z" fill="#e2eaf0" stroke="#7f92a3" />
      <path d="M4 1v12M7 1v12M10 1v12M1 4h12M1 7h12M1 10h12" stroke="#9db0bf" />
    </Icon>
    <span className="ml-[17px] h-6 w-0.5 bg-white" />
    <span className="ml-auto h-[18px] w-0.5 bg-white" />
    <Icon w={16} h={16} className="ml-1.5 mt-1">
      <path d="M1.500 1.500h13v12h-13z" fill="#f2f5f7" />
      <path d="M1 1h14v3H1z" fill={D} stroke="none" />
      <circle cx="11.500" cy="11.500" r="4.500" fill="#fff" stroke="none" />
      <path d="M9.500 14a3.200 3.200 0 010-5M13.500 14a3.200 3.200 0 000-5M11.500 10v4" stroke={B} strokeWidth="1.200" />
    </Icon>
    <Icon w={16} h={16} className="ml-2 mt-1">
      <path d="M1.500 4.500L5 1.500h9.500V11L11 14.500H1.500z" fill={L} stroke="#7f8e9c" />
      <path d="M2 5h9v9M11 5l3-3" stroke="#fff" />
    </Icon>
    <Icon w={14} h={14} className="ml-2 mt-1">
      <circle cx="7.500" cy="6.500" r="4.500" stroke="#7f8e9c" />
      <path d="M7.500 4v5M5 6.500h5M11 10l1.500 1.500" stroke="#7f8e9c" />
    </Icon>
  </footer>
);

export default function App() {
  return (
    <div className="flex h-screen flex-col overflow-hidden bg-[#f5f5f5] font-['Liberation_Sans','Noto_Sans_CJK_SC',sans-serif] text-black">
      <TitleBar />
      <MenuBar />
      <div className="flex shrink-0 bg-[#f5f5f5] pl-[30px]">
        {groups.map((group, i) => (
          <div key={i} className="flex items-start pb-1.5 pt-[7px]">
            <div className="flex pl-[11px] pr-[9px] pt-1">
              {group.map((tool) => (
                <RibbonTool key={tool.label} tool={tool} />
              ))}
            </div>
            {i < groups.length - 1 && <span className="h-[52px] w-0.5 bg-[#d5dbe4]" />}
          </div>
        ))}
      </div>
      <div className="flex min-h-0 flex-1">
        <Sidebar />
        <div className="flex min-w-0 flex-1 flex-col">
          <DocTabs />
          <div className="flex min-h-0 flex-1">
            <main className="min-w-0 flex-1 overflow-hidden">
              <FloorPlan />
            </main>
            <div className="flex w-[300px] shrink-0 flex-col gap-1 bg-[#f0f0f0] p-1">
              <EditPanel />
              <PropertyPanel />
            </div>
          </div>
        </div>
      </div>
      <StatusBar />
    </div>
  );
}
